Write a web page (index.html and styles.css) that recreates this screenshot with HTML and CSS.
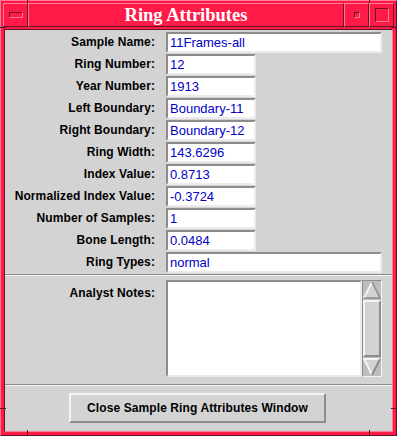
FILE: index.html
```html
<!DOCTYPE html>
<html>
<head>
	<title>Ring Attributes</title>
	<link rel="stylesheet" href="styles.css">
</head>
<body>

	<div class="win">
		<div class="titlebar">
			<div class="tb-btn"><span class="menu-icon"></span></div>
			<div class="tb-title">Ring Attributes</div>
			<div class="tb-btn"><span class="min-icon"></span></div>
			<div class="tb-btn"><span class="max-icon"></span></div>
		</div>

		<div class="client">
			<div class="fields">
				<label>Sample Name:</label><div class="field wide">11Frames-all</div>
				<label>Ring Number:</label><div class="field">12</div>
				<label>Year Number:</label><div class="field">1913</div>
				<label>Left Boundary:</label><div class="field">Boundary-11</div>
				<label>Right Boundary:</label><div class="field">Boundary-12</div>
				<label>Ring Width:</label><div class="field">143.6296</div>
				<label>Index Value:</label><div class="field">0.8713</div>
				<label>Normalized Index Value:</label><div class="field">-0.3724</div>
				<label>Number of Samples:</label><div class="field">1</div>
				<label>Bone Length:</label><div class="field">0.0484</div>
				<label>Ring Types:</label><div class="field wide">normal</div>
			</div>

			<div class="sep"></div>

			<div class="notes-row">
				<label>Analyst Notes:</label>
				<div class="notes">
					<div class="notes-text"></div>
					<div class="scroll">
						<svg class="arrow" width="18" height="18" viewBox="0 0 18 18">
							<polygon points="9,1 17,17 1,17" fill="#d3d3d3"/>
							<polyline points="1,17 9,1" stroke="#f4f4f4" stroke-width="2" fill="none"/>
							<polyline points="9,1 17,17 1,17" stroke="#8c8c8c" stroke-width="1.5" fill="none"/>
						</svg>
						<div class="thumb"></div>
						<svg class="arrow" width="18" height="18" viewBox="0 0 18 18">
							<polygon points="1,1 17,1 9,17" fill="#d3d3d3"/>
							<polyline points="9,17 1,1 17,1" stroke="#f4f4f4" stroke-width="2" fill="none"/>
							<polyline points="17,1 9,17" stroke="#8c8c8c" stroke-width="2" fill="none"/>
						</svg>
					</div>
				</div>
			</div>

			<div class="sep"></div>

			<div class="actions">
				<button class="close-btn">Close Sample Ring Attributes Window</button>
			</div>
		</div>

		<span class="notch n-tl-h"></span><span class="notch n-tl-v"></span>
		<span class="notch n-tr-h"></span><span class="notch n-tr-v"></span>
		<span class="notch n-bl-h"></span><span class="notch n-bl-v"></span>
		<span class="notch n-br-h"></span><span class="notch n-br-v"></span>
	</div>

</body>
</html>
```

FILE: styles.css
```css
body {margin:0;background:#d3d3d3;}
.win {position:relative;width:397px;height:436px;box-sizing:border-box;background:#ff1a48;border:1px solid;border-color:#ff7a96 #5e0f22 #5e0f22 #ff7a96;padding:2px;display:flex;flex-direction:column;}

.titlebar {display:flex;height:24px;}
.tb-btn, .tb-title {box-sizing:border-box;border:1px solid;border-color:#ff7a96 #6b1428 #6b1428 #ff7a96;display:flex;align-items:center;justify-content:center;}
.tb-btn {width:25px;}
.tb-title {flex:1;font:bold 18.5px "Liberation Serif", serif;color:#fff;padding-top:1px;}
.menu-icon {width:14px;height:6px;box-sizing:border-box;border:1px solid;border-color:#6b1428 #ff7a96 #ff7a96 #6b1428;}
.min-icon {width:6px;height:6px;box-sizing:border-box;border:1px solid;border-color:#6b1428 #ff7a96 #ff7a96 #6b1428;}
.max-icon {width:14px;height:14px;box-sizing:border-box;border:1px solid;border-color:#6b1428 #ff7a96 #ff7a96 #6b1428;}

.client {flex:1;margin:2px 1px 1px;background:#d3d3d3;border:1px solid;border-color:#6b1428 #ff7a96 #ff7a96 #6b1428;display:flex;flex-direction:column;font:bold 12px "Liberation Sans", Arial, sans-serif;letter-spacing:0.1px;color:#000;}

.fields {display:grid;grid-template-columns:150px 216px;column-gap:11px;row-gap:1px;padding:2px 0 0;}
label {text-align:right;line-height:21px;height:21px;}
.field {box-sizing:border-box;height:21px;width:90px;background:#fff;border:2px solid;border-color:#8c8c8c #ececec #ececec #8c8c8c;color:#0000c8;font:normal 13px "Liberation Sans", Arial, sans-serif;letter-spacing:0;padding:1px 0 0 2px;white-space:nowrap;overflow:hidden;}
.field.wide {width:216px;}

.sep {height:0;border-top:1px solid #8c8c8c;border-bottom:1px solid #f4f4f4;}
.fields + .sep {margin-top:1px;}

.notes-row {display:grid;grid-template-columns:150px 216px;column-gap:11px;padding:4px 0 7px;}
.notes-row label {padding-top:3px;}
.notes {display:flex;height:97px;}
.notes-text {flex:1;box-sizing:border-box;background:#fff;border:2px solid;border-color:#8c8c8c #ececec #ececec #8c8c8c;}
.scroll {width:20px;box-sizing:border-box;background:#bdbdbd;border:1px solid;border-color:#8c8c8c #f4f4f4 #f4f4f4 #8c8c8c;display:flex;flex-direction:column;}
.arrow {display:block;}
.thumb {flex:1;margin:1px 0;box-sizing:border-box;background:#d3d3d3;border:2px solid;border-color:#f4f4f4 #8c8c8c #8c8c8c #f4f4f4;}

.actions {flex:1;display:flex;align-items:center;justify-content:center;padding-bottom:1px;}
.close-btn {width:257px;height:30px;background:#d3d3d3;border:2px solid;border-color:#f4f4f4 #8c8c8c #8c8c8c #f4f4f4;font:bold 12px "Liberation Sans", Arial, sans-serif;letter-spacing:0.1px;color:#000;padding:0;margin-left:-2px;}

.notch {position:absolute;background:#5e0f22;}
.n-tl-h {left:-1px;top:26px;width:6px;height:1px;}
.n-tl-v {left:26px;top:-1px;width:1px;height:3px;}
.n-tr-h {right:-1px;top:26px;width:6px;height:1px;}
.n-tr-v {right:26px;top:-1px;width:1px;height:3px;}
.n-bl-h {left:-1px;bottom:26px;width:6px;height:1px;}
.n-bl-v {left:26px;bottom:-1px;width:1px;height:6px;}
.n-br-h {right:-1px;bottom:26px;width:6px;height:1px;}
.n-br-v {right:26px;bottom:-1px;width:1px;height:6px;}
```
